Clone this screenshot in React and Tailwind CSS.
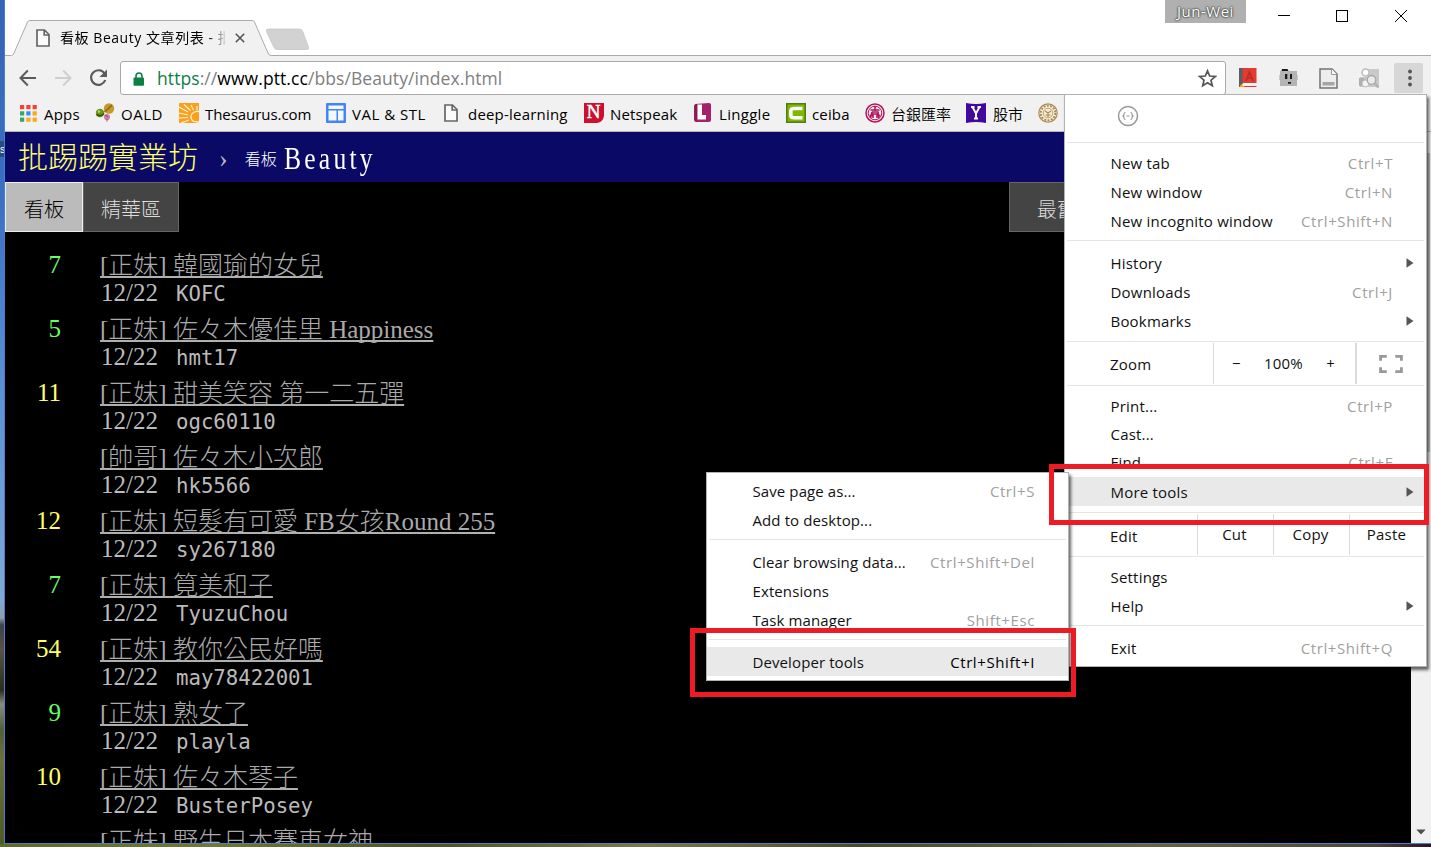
import React from "react";

const UI = "font-['Open_Sans','Noto_Sans_CJK_TC',sans-serif]";

function PageIcon({ className = "" }) {
  return (
    <svg className={className} width="14" height="18" viewBox="0 0 14 18" fill="#fbfbfb" stroke="#666" strokeWidth="1.7">
      <path d="M1 1h7.5L13 5.5V17H1z" />
      <path d="M8.2 1v5H13" fill="none" />
    </svg>
  );
}

function AppsIcon() {
  const c = ["#f44336", "#f44336", "#f44336", "#34a65f", "#2f8df5", "#fba81c", "#34a65f", "#fba81c", "#fba81c"];
  return (
    <svg className="ml-[1px]" width="17" height="17" viewBox="0 0 17 17">
      {c.map((f, i) => (
        <rect key={i} x={(i % 3) * 6.3} y={Math.floor(i / 3) * 6.3} width="4.2" height="4.2" fill={f} />
      ))}
    </svg>
  );
}

function OaldIcon() {
  return (
    <svg width="20" height="20" viewBox="0 0 20 20">
      <circle cx="14" cy="5.5" r="5.2" fill="#c49a2c" />
      <path d="M9.5 9 17 2.2" stroke="#8d6a16" strokeWidth="1.6" />
      <circle cx="5" cy="10" r="4.2" fill="#6d9414" />
      <path d="M1.5 11.5q4 3 7.500-1" stroke="#39540a" strokeWidth="1.6" fill="none" />
      <circle cx="4" cy="8.5" r="1.3" fill="#b4d16a" />
      <circle cx="12" cy="14" r="3.1" fill="#cf7fa8" />
      <path d="M12 16v2.500M10 12l3 2" stroke="#9a4474" strokeWidth="1" />
    </svg>
  );
}

function SunIcon() {
  return (
    <svg width="20" height="20" viewBox="0 0 20 20">
      <rect width="20" height="20" fill="#f9a11f" />
      <path d="M20 8.500c-6-1-10 4-7 8.500 1 2 3 2 7 2" fill="#f9a11f" stroke="#fff0cf" strokeWidth="1.3" />
      <path d="M0 4l9 5M5 1.500 11.500 7.500M12 2l2.500 5M18 3v4.500M0 10l9 2M0 15l9-.5M2 20l8-3" stroke="#fff0cf" strokeWidth="1.2" />
    </svg>
  );
}

function PanelIcon() {
  return (
    <svg width="20" height="20" viewBox="0 0 20 20">
      <rect width="20" height="20" rx="1" fill="#4285f4" />
      <path d="M2.500 2.500h15V6h-15zM2.500 7.500h8v10h-8zM12 7.500h5.500v10H12z" fill="#f4f7fd" />
    </svg>
  );
}

function NetspeakIcon() {
  return (
    <svg width="20" height="20" viewBox="0 0 20 20">
      <path d="M0 0h20v13q-1 6-7 7H0z" fill="#cb1030" />
      <text x="9.500" y="15" textAnchor="middle" fontSize="19" fontFamily="Liberation Serif, serif" fill="#fff" stroke="#fff" strokeWidth=".5">N</text>
    </svg>
  );
}

function LinggleIcon() {
  return (
    <svg width="19" height="20" viewBox="0 0 19 20">
      <path d="M2 1 16 0q2 0 2 2v15q0 2-2 2H3q-2 0-2-3V3z" fill="#a3226b" />
      <path d="M4 1 1.500 2.500v14L4 19z" fill="#8a1a58" />
      <path d="M4.500 1.500H9V12h4v4.500H4.500z" fill="#fff" />
    </svg>
  );
}

function CeibaIcon() {
  return (
    <svg width="20" height="20" viewBox="0 0 20 20">
      <rect x=".75" y=".75" width="18.500" height="18.500" fill="#7fb800" stroke="#4f7d1c" strokeWidth="1.500" />
      <path d="M16.500 5.500H8Q4.800 5.500 4.800 8v4q0 2.800 3.200 2.800h8.500" fill="none" stroke="#fff" strokeWidth="3.600" />
    </svg>
  );
}

function BankIcon() {
  return (
    <svg width="20" height="20" viewBox="0 0 20 20" fill="none" stroke="#b5135c">
      <circle cx="10" cy="10" r="9" strokeWidth="1.500" />
      <circle cx="10" cy="10" r="6.800" strokeWidth="1" />
      <path d="M5.500 7h9M10 3v5M7 9h6L14 15M7 9l-1.500 6M8 15V11h4v4M4.500 12.500h3M12.500 12.500h3" strokeWidth="1.600" />
    </svg>
  );
}

function YahooIcon() {
  return (
    <svg width="20" height="20" viewBox="0 0 20 20">
      <path d="M0 0q10 2 20 0v20q-10-2-20 0z" fill="#43099c" />
      <path d="M5 4h3.500M11.500 4H15M6.500 4 10 10.500 13.500 4M10 10v5.500M8 15.500h4" stroke="#fff" strokeWidth="1.900" fill="none" />
    </svg>
  );
}

function GoldIcon() {
  return (
    <svg width="20" height="20" viewBox="0 0 20 20" fill="none" stroke="#b08a4a">
      <circle cx="10" cy="10" r="9.200" strokeWidth="1.200" />
      <circle cx="10" cy="10" r="7.300" strokeWidth="2" strokeDasharray="2 1.300" />
      <circle cx="10" cy="10" r="4.800" fill="#f7ecd2" strokeWidth=".8" />
      <path d="M7 8l3 2 3-2M10 10v4M7.500 12h5" strokeWidth="1.200" />
    </svg>
  );
}

const bookmarks = [
  ["Apps", <AppsIcon />, "w-[76px]", "w-[25px]", "tracking-[0.2px]"],
  ["OALD", <OaldIcon />, "w-[84px]", "w-[26px]", "tracking-[0.5px]"],
  ["Thesaurus.com", <SunIcon />, "w-[147px]", "w-[26px]", "tracking-[-0.05px]"],
  ["VAL & STL", <PanelIcon />, "w-[116px]", "w-[26px]", "tracking-[0.5px]"],
  ["deep-learning", <PageIcon className="ml-[2px]" />, "w-[142px]", "w-[26px]", "tracking-[0.2px]"],
  ["Netspeak", <NetspeakIcon />, "w-[109px]", "w-[26px]", "tracking-[0.15px]"],
  ["Linggle", <LinggleIcon />, "w-[93px]", "w-[26px]", "tracking-[0.3px]"],
  ["ceiba", <CeibaIcon />, "w-[79px]", "w-[26px]", "tracking-[0.15px]"],
  ["台銀匯率", <BankIcon />, "w-[101px]", "w-[26px]", "font-[350]"],
  ["股市", <YahooIcon />, "w-[72px]", "w-[27px]", "font-[350]"],
  ["", <GoldIcon />, "w-[20px]", "w-[20px]", ""],
];

const posts = [
  ["7", "[正妹] 韓國瑜的女兒", "KOFC"],
  ["5", "[正妹] 佐々木優佳里 Happiness", "hmt17"],
  ["11", "[正妹] 甜美笑容 第一二五彈", "ogc60110"],
  ["", "[帥哥] 佐々木小次郎", "hk5566"],
  ["12", "[正妹] 短髮有可愛 FB女孩Round 255", "sy267180"],
  ["7", "[正妹] 筧美和子", "TyuzuChou"],
  ["54", "[正妹] 教你公民好嗎", "may78422001"],
  ["9", "[正妹] 熟女了", "playla"],
  ["10", "[正妹] 佐々木琴子", "BusterPosey"],
  ["", "[正妹] 野生日本賽車女神", ""],
];

function TabStrip() {
  return (
    <div className="relative flex h-[56px] shrink-0 bg-white">
      <svg className="absolute left-0 top-0" width="1426" height="56" viewBox="0 0 1426 56">
        <path d="M0 55.500h6.500Q8 55.500 9 53L22.500 22q.8-1.500 2.500-1.500h222q1.800 0 2.500 1.500L263 53q1 2.500 3 2.500H1426V56H0z" fill="#f1f1f1" />
        <path d="M0 55.500h6.500Q8 55.500 9 53L22.500 22q.8-1.500 2.500-1.500h222q1.800 0 2.500 1.500L263 53q1 2.500 3 2.500H1426" fill="none" stroke="#ababab" />
        <path d="M263 29h31.500q2 0 3 2l6 16q.8 2.500-1.500 2.500h-30q-2 0-3-2L261.500 31.500Q261 29 263 29z" fill="#d2d2d2" stroke="#c6c6c6" strokeWidth=".8" />
      </svg>
      <div className="relative flex h-[36px] w-[240px] items-center self-end pl-[31px]">
        <PageIcon className="mb-[1px] shrink-0" />
        <div className={`ml-[10px] w-[167px] overflow-hidden whitespace-nowrap text-[14px] leading-[20px] tracking-[0.55px] text-black ${UI} mb-px [mask-image:linear-gradient(to_right,#000_148px,transparent_168px)]`}>
          看板 Beauty 文章列表 - 批踢踢實業坊
        </div>
        <svg className="mb-[1px] ml-[10px] shrink-0" width="10" height="10" viewBox="0 0 10 10" stroke="#555" strokeWidth="1.600">
          <path d="M.8.800 9.200 9.200M9.200.800.8 9.200" />
        </svg>
      </div>
      <div className="relative ml-auto flex h-[32px] items-start">
        <div className={`h-[23px] w-[81px] bg-[#b0b0b0] text-center text-[15px] leading-[23px] tracking-[0.5px] text-white ${UI} [text-shadow:0_0_2px_#222,0_0_2px_#222]`}>Jun-Wei</div>
        <svg className="ml-[32px] mt-[9px]" width="130" height="14" viewBox="0 0 130 14" fill="none" stroke="#000">
          <path d="M0 6.500h12" />
          <rect x="58.500" y="1.500" width="11" height="11" />
          <path d="M117 1l12 12M129 1l-12 12" />
        </svg>
        <div className="w-[23px]" />
      </div>
    </div>
  );
}

function Toolbar() {
  return (
    <div className="flex h-[40px] shrink-0 items-start bg-[#f1f1f1]">
      <svg className="ml-[14px] mt-[12px] shrink-0" width="90" height="20" viewBox="0 0 90 20" fill="none" strokeWidth="2">
        <path d="M17 10H2M8.800 2.500 1.500 10l7.300 7.500" stroke="#5a5a5a" />
        <path d="M36 10h15M44.200 2.500 51.500 10l-7.300 7.500" stroke="#cfcfcf" />
        <path d="M85.500 5.500A7.300 7.300 0 1 0 86.300 12" stroke="#5a5a5a" strokeWidth="2.200" />
        <path d="M88 1.500V9h-7.500z" fill="#5a5a5a" />
      </svg>
      <div className="ml-[11px] mt-[5px] flex h-[34px] w-[1106px] shrink-0 items-center rounded-[3px] border border-[#a9a9a9] bg-white">
        <svg className="ml-[12px] mt-[1px]" width="12" height="14" viewBox="0 0 12 14">
          <path d="M3 7V4a3 3 0 0 1 6 0v3" fill="none" stroke="#0b8043" strokeWidth="1.600" />
          <rect x=".5" y="5.500" width="10.500" height="8.300" rx="1" fill="#0b8043" />
        </svg>
        <div className={`ml-[12px] whitespace-nowrap text-[17.500px] leading-[24px] tracking-[0.08px] text-black ${UI}`}>
          <span className="text-[#0b8043]">https</span>
          <span className="text-[#808080]">://</span>www.ptt.cc<span className="text-[#808080]">/bbs/Beauty/index.html</span>
        </div>
        <svg className="ml-auto mr-[8px]" width="19" height="19" viewBox="0 0 19 19" fill="none" stroke="#555" strokeWidth="1.700">
          <path d="M9.500 1.800 11.700 7l5.600.5-4.300 3.700 1.300 5.500-4.800-2.900-4.800 2.900L6 11.200 1.700 7.500 7.300 7z" />
        </svg>
      </div>
      <div className="ml-[13px] mt-[12px] flex shrink-0 items-start">
        <svg width="18" height="20" viewBox="0 0 18 20">
          <path d="M0 0h17.500v15H4l-3 4H0z" fill="#e23b30" />
          <path d="M0 0h3.500v16L0 19z" fill="#595f66" />
          <path d="M4 16h13.500v3H4z" fill="#f2f2f2" />
          <path d="M4 18.500h13.500" stroke="#d8372c" />
          <path d="M2 16l2 1.500L6 19H1z" fill="#f5b400" />
          <path d="M7 13 10.500 4 14 13M8.300 10h4.500" fill="none" stroke="#b52d27" strokeWidth="1.600" />
        </svg>
        <svg className="ml-[22px]" width="19" height="20" viewBox="0 0 19 20">
          <rect x="1" y="3" width="17" height="15" fill="#b4b4b4" />
          <path d="M0 7h1v5H0zM18 7h1v5h-1z" fill="#c9c9c9" />
          <path d="M3 1h5.500l1 2H2.500zM6 6h2.300v5H6zM11 6h2v5h-2zM9 14h3v1.800H9z" fill="#191919" />
        </svg>
        <svg className="ml-[21px]" width="19" height="21" viewBox="0 0 19 21">
          <path d="M1 1h12l5 5v14H1z" fill="#ededed" stroke="#737373" strokeWidth="1.500" />
          <path d="M12.500 1v5.500H18" fill="#fff" stroke="#999" />
          <rect x="3.500" y="14" width="12" height="3.500" fill="#a5a5a5" />
        </svg>
        <svg className="ml-[21px]" width="21" height="21" viewBox="0 0 21 21">
          <rect x="1" y="1" width="19" height="18" fill="#c9c9c9" />
          <path d="M0 0h8l3 4-3 5H0z" fill="#f3f3f3" />
          <circle cx="6.500" cy="4.500" r="3.500" fill="#fff" stroke="#bbb" strokeWidth="1.500" />
          <path d="M0 10h5l2 3-3 5H0z" fill="#b0b0b0" />
          <circle cx="6.500" cy="15.500" r="3.500" fill="#f3f3f3" stroke="#bbb" />
          <circle cx="12.500" cy="12" r="4.300" fill="#e9e9e9" stroke="#a5a5a5" strokeWidth="1.300" />
          <path d="M15.500 15l4 4.500" stroke="#b0b0b0" strokeWidth="2.600" />
        </svg>
      </div>
      <div className="ml-[14px] mt-[7px] flex h-[30px] w-[29px] shrink-0 items-center justify-center rounded-[2px] bg-[#d7d7d7]">
        <svg className="ml-[2px]" width="4" height="18" viewBox="0 0 4 18" fill="#555">
          <circle cx="2" cy="2.500" r="1.900" />
          <circle cx="2" cy="9" r="1.900" />
          <circle cx="2" cy="15.500" r="1.900" />
        </svg>
      </div>
    </div>
  );
}

function BookmarkBar() {
  return (
    <div className={`flex h-[36px] shrink-0 items-center border-b border-[#b6b6b6] bg-[#f1f1f1] pb-px pl-[14px] text-[15px] text-black ${UI}`}>
      {bookmarks.map(([label, icon, w, iw, t], i) => (
        <div key={i} className={`flex shrink-0 items-center ${w}`}>
          <span className={`shrink-0 ${iw}`}>{icon}</span>
          <span className={`mt-[2px] whitespace-nowrap leading-[20px] ${t}`}>{label}</span>
        </div>
      ))}
    </div>
  );
}

function Board() {
  return (
    <div className="flex min-w-0 flex-1 flex-col overflow-hidden bg-black">
      <div className="flex h-[50px] shrink-0 items-center bg-[#0a0a66] pl-[13px] font-['Liberation_Serif','Noto_Sans_CJK_TC',serif] font-light">
        <span className="mt-px text-[30px] leading-[50px] text-[#ffff66]">批踢踢實業坊</span>
        <span className="ml-[21px] mt-[4px] text-[26px] leading-[50px] text-[#bbb]">›</span>
        <span className="ml-[17px] mt-[6px] text-[16px] text-white">看板</span>
        <span className="ml-[7px] mt-px inline-block origin-left scale-x-[0.8] text-[32px] leading-[50px] tracking-[4px] text-white">Beauty</span>
      </div>
      <div className="flex h-[50px] shrink-0 font-['Noto_Sans_CJK_TC',sans-serif] text-[20px] font-light leading-[50px]">
        <div className="w-[78px] border border-[#eee] bg-[#bbb] text-center leading-[51px] text-black">看板</div>
        <div className="w-[96px] border border-[#666] bg-[#444] text-center leading-[51px] text-[#ddd]">精華區</div>
        <div className="ml-[830px] w-[96px] shrink-0 whitespace-nowrap border border-[#666] bg-[#444] text-center leading-[51px] text-[#ddd]">最舊</div>
      </div>
      <div className="flex flex-col pt-[19px] font-['Liberation_Serif','Noto_Sans_CJK_TC',serif] text-[25px] font-light leading-[28px] text-[#bbb]">
        {posts.map(([n, title, user], i) => (
          <div key={i} className="flex h-[64px] shrink-0">
            <div className={`w-[56px] text-right ${n.length > 1 ? "text-[#ffff66]" : "text-[#66ff66]"}`}>{n}</div>
            <div className="ml-[39px] whitespace-nowrap">
              <div className="h-[28px] pt-px text-[#aaa] underline decoration-[#b0b0b0] decoration-[2px] underline-offset-[2px] [text-decoration-skip-ink:none]">{title}</div>
              <div className="flex h-[28px]">
                <span className="w-[76px] pl-px">12/22</span>
                <span className="pt-px font-['DejaVu_Sans_Mono',monospace] text-[20.700px]">{user}</span>
              </div>
            </div>
          </div>
        ))}
      </div>
    </div>
  );
}

function Arrow() {
  return (
    <svg className="mb-px ml-auto mr-[12px]" width="8" height="10" viewBox="0 0 8 10" fill="#555">
      <path d="M.5.300 7.500 5 .5 9.700z" />
    </svg>
  );
}

function Item({ label, keys, arrow, active, h = "h-[29px]" }) {
  return (
    <div className={`flex shrink-0 items-center whitespace-nowrap pl-[45.500px] ${h} ${active ? "bg-[#e9e9e9] pt-px" : ""}`}>
      <span>{label}</span>
      {keys && <span className={`ml-auto pr-[33px] tracking-[0.6px] ${active ? "text-black" : "text-[#a0a0a0]"}`}>{keys}</span>}
      {arrow && <Arrow />}
    </div>
  );
}

function Sep({ m = "" }) {
  return <div className={`mx-[2px] h-px shrink-0 bg-[#e4e4e4] ${m}`} />;
}

function MainMenu() {
  return (
    <div className={`absolute left-[1064px] top-[94px] flex h-[573px] w-[363px] flex-col border border-[#b2b2b2] bg-white text-[15px] tracking-[0.2px] text-[#111] shadow-[2px_3px_3px_rgba(0,0,0,0.6)] ${UI}`}>
      <div className="flex h-[47px] shrink-0 pl-[52px] pt-[10px]">
        <svg width="22" height="22" viewBox="0 0 22 22" fill="none" stroke="#999" strokeWidth="1.500">
          <circle cx="11" cy="11" r="9.500" />
          <path d="M8.500 7.500q-1.500 0-1.500 1.500v1l-1 1 1 1v1q0 1.500 1.500 1.500M13.500 7.500Q15 7.500 15 9v1l1 1-1 1v1q0 1.500-1.500 1.500M9.500 11h3" strokeWidth="1.100" />
        </svg>
      </div>
      <Sep m="mb-[6px]" />
      <Item label="New tab" keys="Ctrl+T" />
      <Item label="New window" keys="Ctrl+N" />
      <Item label="New incognito window" keys="Ctrl+Shift+N" />
      <Sep m="mt-[4px] mb-[8px]" />
      <Item label="History" arrow />
      <Item label="Downloads" keys="Ctrl+J" />
      <Item label="Bookmarks" arrow />
      <Sep m="mt-[5px]" />
      <div className="flex h-[43px] shrink-0 items-center">
        <div className="w-[148px] pl-[45px] pt-[2px]">Zoom</div>
        <div className="flex h-[41px] w-[144px] items-center justify-between border-l border-r-2 border-[#dadada] pl-[18px] pr-[20px]">
          <span>−</span>
          <span>100%</span>
          <span>+</span>
        </div>
        <svg className="ml-[22px]" width="24" height="18" viewBox="0 0 25 19" fill="none" stroke="#999" strokeWidth="3">
          <path d="M1.500 6V1.500H8M17 1.500h6.500V6M23.500 13v4.500H17M8 17.500H1.500V13" />
        </svg>
      </div>
      <Sep m="mb-[6px]" />
      <Item label="Print..." keys="Ctrl+P" />
      <Item label="Cast..." h="h-[27px]" />
      <Item label="Find..." keys="Ctrl+F" h="h-[29px]" />
      <Item label="More tools" arrow active />
      <Sep m="mt-[6px]" />
      <div className="flex h-[43px] shrink-0 items-center">
        <div className="w-[132px] pl-[45px] pt-[4px]">Edit</div>
        <div className="h-[41px] w-[76px] border-l border-[#dadada] pr-[2px] text-center leading-[41px]">Cut</div>
        <div className="h-[41px] w-[76px] border-l border-[#dadada] pr-[2px] text-center leading-[41px]">Copy</div>
        <div className="h-[41px] w-[76px] border-l border-[#dadada] pr-[2px] text-center leading-[41px]">Paste</div>
      </div>
      <Sep m="mb-[6px]" />
      <Item label="Settings" />
      <Item label="Help" arrow />
      <Sep m="mt-[4px] mb-[8px]" />
      <Item label="Exit" keys="Ctrl+Shift+Q" />
    </div>
  );
}

function ToolsMenu() {
  return (
    <div className={`absolute left-[706px] top-[472px] flex h-[209px] w-[363px] flex-col border border-[#b2b2b2] bg-white pt-[4px] text-[15px] tracking-[0.1px] text-[#111] shadow-[2px_3px_3px_rgba(0,0,0,0.6)] ${UI}`}>
      <Item label="Save page as..." keys="Ctrl+S" />
      <Item label="Add to desktop..." />
      <Sep m="mt-[4px] mb-[8px]" />
      <Item label="Clear browsing data..." keys="Ctrl+Shift+Del" />
      <Item label="Extensions" />
      <Item label="Task manager" keys="Shift+Esc" />
      <Sep m="mt-[4px] mb-[7px]" />
      <Item label="Developer tools" keys="Ctrl+Shift+I" active />
    </div>
  );
}

export default function App() {
  return (
    <div className="relative flex h-[847px] w-[1431px] flex-col overflow-hidden bg-[#55572c]">
      <div className="flex h-[844px] shrink-0">
        <div className="flex w-[5px] shrink-0 flex-col overflow-hidden border-r border-[#4a7fd0] bg-[linear-gradient(to_bottom,#3565b5_0px,#3b6fc4_200px,#5b93d6_400px,#7fa9d6_600px,#8f9dab_618px,#3d424c_625px,#5b5148_650px,#262f1e_690px,#8a8a80_704px,#50603a_730px,#6d7040_760px,#4e5a25_844px)]">
          <span className="mt-[141px] h-[16px] bg-[#2a4a80] font-['Liberation_Sans',sans-serif] text-[11px] leading-[16px] text-white">s</span>
        </div>
        <div className="flex w-[1426px] shrink-0 flex-col border-b border-[#4a7fd0]">
          <TabStrip />
          <Toolbar />
          <BookmarkBar />
          <div className="flex min-h-0 flex-1">
            <Board />
            <div className="flex w-[20px] shrink-0 flex-col items-center bg-[#f1f1f1] pt-[21px]">
              <div className="h-[299px] w-[18px] shrink-0 bg-[#c1c1c1]" />
              <svg className="mb-[8px] mt-auto" width="10" height="6" viewBox="0 0 10 6" fill="#505050">
                <path d="M.3.500h9.400L5 5.500z" />
              </svg>
            </div>
          </div>
        </div>
      </div>
      <div className="h-[3px] w-full bg-[linear-gradient(to_right,#5c6b26,#6f7a30_15%,#4b5320_30%,#7b7a45_45%,#4a4a28_60%,#66663a_80%,#4b4738_96%,#2a1226)]" />
      <MainMenu />
      <ToolsMenu />
      <div className="absolute left-[1049px] top-[464px] h-[61px] w-[380px] border-[5px] border-[#ed1c24]" />
      <div className="absolute left-[690px] top-[628px] h-[69px] w-[386px] border-[5px] border-[#ed1c24]" />
    </div>
  );
}
